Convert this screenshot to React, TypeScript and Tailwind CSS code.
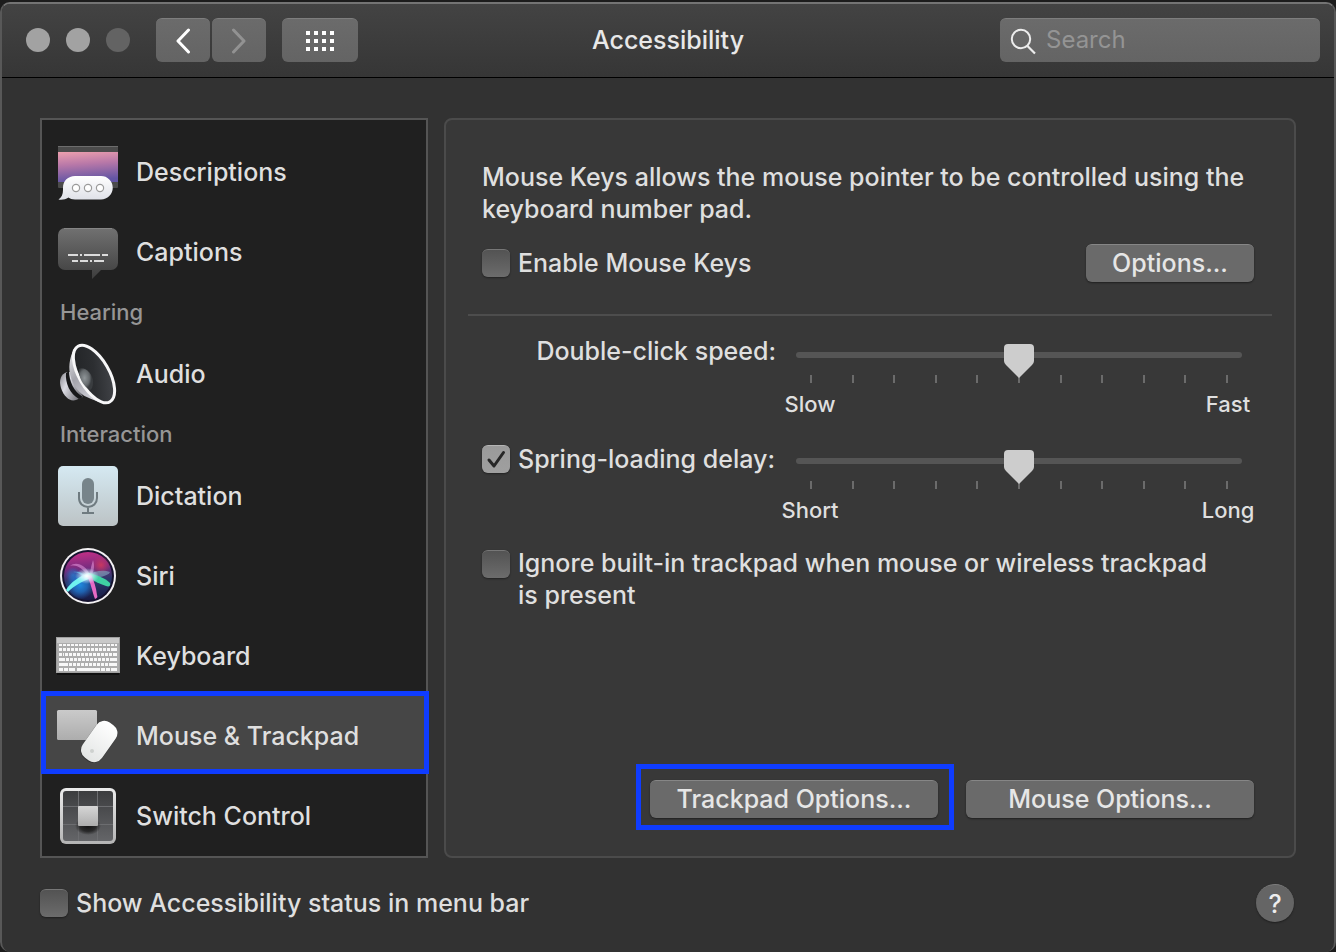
import React, { useState } from 'react';

function DescriptionsIcon() {
  return (
    <svg width="64" height="64" viewBox="0 0 64 64" aria-hidden="true">
      <defs>
        <linearGradient id="desc-sky" x1="0" y1="0" x2="0.15" y2="1">
          <stop offset="0" stopColor="#eda0ae" />
          <stop offset="0.45" stopColor="#b878a8" />
          <stop offset="1" stopColor="#6355a4" />
        </linearGradient>
        <linearGradient id="desc-bubble" x1="0" y1="0" x2="0" y2="1">
          <stop offset="0" stopColor="#ffffff" />
          <stop offset="1" stopColor="#dfe1e8" />
        </linearGradient>
      </defs>
      <rect x="2" y="6" width="60" height="42" rx="1" fill="#4b4b4b" />
      <rect x="2" y="6" width="60" height="1" fill="#6d6d6d" />
      <rect x="2" y="12" width="60" height="30" fill="url(#desc-sky)" />
      <path d="M19 36h26a11.500 11.500 0 0 1 0 23.500H19c-3 0-5-.8-6.500-2C9.500 59.500 6 60 2.500 59.500 5.500 57.500 7 54.500 7 50v-2.500C7 41 12 36 19 36z" fill="url(#desc-bubble)" />
      <g fill="#fff" stroke="#9b9b9b" strokeWidth="1.200">
        <circle cx="20" cy="48" r="3.600" />
        <circle cx="32" cy="48" r="3.600" />
        <circle cx="44" cy="48" r="3.600" />
      </g>
    </svg>
  );
}

function CaptionsIcon() {
  return (
    <svg width="64" height="64" viewBox="0 0 64 64" aria-hidden="true">
      <defs>
        <linearGradient id="cap-bg" x1="0" y1="0" x2="0" y2="1">
          <stop offset="0" stopColor="#717171" />
          <stop offset="1" stopColor="#3e3e3e" />
        </linearGradient>
      </defs>
      <path d="M9 8h46a7 7 0 0 1 7 7v28a7 7 0 0 1-7 7H45l-9 9v-9H9a7 7 0 0 1-7-7V15a7 7 0 0 1 7-7z" fill="url(#cap-bg)" />
      <path d="M8 8.500h48" stroke="#858585" />
      <path d="M12 35h10M24 35h2M28 35h16M46 35h6M16 41h6M24 41h8M34 41h2M38 41h10" stroke="#dcdcdc" strokeWidth="2" />
    </svg>
  );
}

function AudioIcon() {
  return (
    <svg width="64" height="64" viewBox="0 0 64 64" aria-hidden="true">
      <defs>
        <linearGradient id="aud-body" x1="0" y1="0" x2="0.7" y2="1">
          <stop offset="0" stopColor="#f4f4f6" />
          <stop offset="0.45" stopColor="#a3a3ab" />
          <stop offset="1" stopColor="#dcdce4" />
        </linearGradient>
        <linearGradient id="aud-base" x1="0" y1="0" x2="1" y2="0.6">
          <stop offset="0" stopColor="#85858c" />
          <stop offset="0.4" stopColor="#dcdce4" />
          <stop offset="1" stopColor="#77777e" />
        </linearGradient>
        <linearGradient id="aud-cone" x1="0" y1="0" x2="1" y2="1">
          <stop offset="0" stopColor="#1f2123" />
          <stop offset="0.5" stopColor="#2c2e31" />
          <stop offset="1" stopColor="#4a4c51" />
        </linearGradient>
        <radialGradient id="aud-cap" cx="0.4" cy="0.45">
          <stop offset="0" stopColor="#8f9598" />
          <stop offset="0.7" stopColor="#656a6d" />
          <stop offset="1" stopColor="#3a3d40" />
        </radialGradient>
      </defs>
      <path d="M11 30C5 32 2.500 38 5 46c3 9 9 14 15 12l7-3-13-25z" fill="url(#aud-base)" />
      <path d="M13 29c0 10 5 21 14 26l-4 2C14 52 9 41 10 31z" fill="#17181a" />
      <path d="M22 3C16 7 12.500 19 13.500 29c1.500 11 7 20 15 25 8 4 17 7 25 8z" fill="url(#aud-body)" />
      <ellipse cx="38" cy="32" rx="15" ry="32" transform="rotate(-30 38 32)" fill="url(#aud-cone)" stroke="#f7f7f8" strokeWidth="3" />
      <path d="M23 27c5-3 14 4 14 13 0 4-1 7-3 8-7-4-12-13-11-21z" fill="url(#aud-cap)" />
    </svg>
  );
}

function DictationIcon() {
  return (
    <svg width="64" height="64" viewBox="0 0 64 64" aria-hidden="true">
      <defs>
        <linearGradient id="dict-bg" x1="0" y1="0" x2="0" y2="1">
          <stop offset="0" stopColor="#d5e9f2" />
          <stop offset="1" stopColor="#bcc3c5" />
        </linearGradient>
      </defs>
      <rect x="2" y="2" width="60" height="60" rx="5" fill="url(#dict-bg)" />
      <rect x="26" y="14" width="12" height="26" rx="6" fill="#77848a" />
      <path d="M23 28v6c0 5.500 4 9 9 9s9-3.500 9-9v-6M32 43v6M26 49h12" fill="none" stroke="#6f7b80" strokeWidth="2" />
    </svg>
  );
}

function SiriIcon() {
  return (
    <svg width="64" height="64" viewBox="0 0 64 64" aria-hidden="true">
      <defs>
        <linearGradient id="siri-bg" x1="0.4" y1="0" x2="0.5" y2="1">
          <stop offset="0" stopColor="#c02f86" />
          <stop offset="0.32" stopColor="#7a2c80" />
          <stop offset="0.6" stopColor="#2b3a6c" />
          <stop offset="1" stopColor="#171a44" />
        </linearGradient>
        <radialGradient id="siri-blue">
          <stop offset="0" stopColor="#1f8be0" />
          <stop offset="0.5" stopColor="#1f7bd6" stopOpacity="0.7" />
          <stop offset="1" stopColor="#1f6bd0" stopOpacity="0" />
        </radialGradient>
        <radialGradient id="siri-red">
          <stop offset="0" stopColor="#c8385f" />
          <stop offset="1" stopColor="#c03068" stopOpacity="0" />
        </radialGradient>
        <radialGradient id="siri-glow">
          <stop offset="0" stopColor="#ffffff" />
          <stop offset="0.35" stopColor="#e6f8ff" stopOpacity="0.85" />
          <stop offset="1" stopColor="#bfe6ff" stopOpacity="0" />
        </radialGradient>
      </defs>
      <circle cx="32" cy="32" r="28" fill="#f4f2f4" />
      <circle cx="32" cy="32" r="26" fill="#15122f" />
      <circle cx="32" cy="32" r="24" fill="url(#siri-bg)" />
      <circle cx="24" cy="41" r="14.500" fill="url(#siri-blue)" />
      <circle cx="17" cy="31" r="8" fill="url(#siri-blue)" opacity="0.6" />
      <circle cx="45" cy="21" r="10" fill="url(#siri-red)" />
      <path d="M32 32C27 25 21 20 14 22c6-5 16-1 20 9 0-6 2-11 3-15 2 6 1 13-3 17z" fill="#e79be0" opacity="0.55" />
      <path d="M32 31c8-5 16-5 22-3-2 4-10 6-20 5z" fill="#7fa5bd" opacity="0.65" />
      <path d="M34 29C24 31 14 39 10 46l2 2c6-6 13-10 23-14z" fill="#6ff3f0" />
      <path d="M33 29c8 2 16 5 21 10 1 3-1 4-4 3-6-2-13-5-18-9z" fill="#3fd0a2" />
      <path d="M31 32c4 7 5 15 8 23 2-1 3-2 2-4-1-8-3-14-6-20z" fill="#e56ac5" />
      <path d="M29 32c-2-4-8-5-12-4 5 0 9 3 11 7z" fill="#55b8e8" opacity="0.7" />
      <ellipse cx="31" cy="32" rx="12" ry="8" fill="url(#siri-glow)" />
    </svg>
  );
}

function KeyboardIcon() {
  return (
    <svg width="64" height="64" viewBox="0 0 64 64" aria-hidden="true">
      <rect x="1" y="47" width="62" height="4" fill="#111" />
      <rect x="0" y="13" width="64" height="36" fill="#a0a0a0" />
      <rect x="1" y="14" width="62" height="5" fill="#c9c9c9" />
      <rect x="1" y="19" width="62" height="29" fill="#adadad" />
      <g stroke="#f8f8f8" strokeWidth="3">
        <path d="M3 21h58" strokeWidth="2" strokeDasharray="3 1" />
        <path d="M3 25.500h54" strokeDasharray="3 1" />
        <path d="M55 25.500h6" />
        <path d="M3 30.500h5M9 30.500h48" strokeDasharray="3 1" />
        <path d="M57 30.500h4" />
        <path d="M3 35.500h6M54 35.500h7" />
        <path d="M10 35.500h43" strokeDasharray="3 1" />
        <path d="M3 40.500h9M53 40.500h8" />
        <path d="M13 40.500h39" strokeDasharray="3 1" />
        <path d="M3 45.500h4M8 45.500h4M13 45.500h6M21 45.500h23M45 45.500h4M50 45.500h4M55 45.500h6" />
      </g>
    </svg>
  );
}

function MouseTrackpadIcon() {
  return (
    <svg width="64" height="64" viewBox="0 0 64 64" aria-hidden="true">
      <defs>
        <linearGradient id="pad-bg" x1="0" y1="0" x2="0" y2="1">
          <stop offset="0" stopColor="#cacaca" />
          <stop offset="1" stopColor="#adadad" />
        </linearGradient>
        <linearGradient id="mouse-bg" x1="0" y1="0" x2="0" y2="1">
          <stop offset="0" stopColor="#ffffff" />
          <stop offset="1" stopColor="#e4e6e5" />
        </linearGradient>
      </defs>
      <rect x="1" y="6" width="40" height="30" rx="1.500" fill="url(#pad-bg)" />
      <rect x="31" y="16" width="24" height="44" rx="10" transform="rotate(35 43 38)" fill="#222" opacity="0.5" />
      <rect x="31.500" y="16" width="23.500" height="43" rx="9.500" transform="rotate(35 43.250 37.500)" fill="url(#mouse-bg)" />
      <circle cx="36" cy="47" r="2" fill="#ced1cf" />
    </svg>
  );
}

function SwitchControlIcon() {
  return (
    <svg width="64" height="64" viewBox="0 0 64 64" aria-hidden="true">
      <defs>
        <linearGradient id="sw-frame" x1="0" y1="0" x2="0" y2="1">
          <stop offset="0" stopColor="#ececec" />
          <stop offset="1" stopColor="#b4b4b4" />
        </linearGradient>
        <linearGradient id="sw-bg" x1="0" y1="0" x2="0" y2="1">
          <stop offset="0" stopColor="#3c3d3f" />
          <stop offset="1" stopColor="#646568" />
        </linearGradient>
        <linearGradient id="sw-key" x1="0" y1="0" x2="0" y2="1">
          <stop offset="0" stopColor="#d6d6d6" />
          <stop offset="1" stopColor="#adadad" />
        </linearGradient>
        <radialGradient id="sw-shadow">
          <stop offset="0" stopColor="#141414" />
          <stop offset="0.6" stopColor="#1c1c1c" stopOpacity="0.8" />
          <stop offset="1" stopColor="#1c1c1c" stopOpacity="0" />
        </radialGradient>
      </defs>
      <rect x="4" y="4" width="56" height="56" rx="6" fill="url(#sw-frame)" />
      <rect x="7" y="7" width="50" height="50" rx="3" fill="url(#sw-bg)" />
      <path d="M22.500 7v50M41.500 7v50M7 22.500h50M7 40.500h50" stroke="#6c6d70" />
      <ellipse cx="32" cy="42" rx="13" ry="9" fill="url(#sw-shadow)" />
      <rect x="22" y="22" width="20" height="20" rx="1" fill="url(#sw-key)" />
    </svg>
  );
}

const groups = [
  {
    title: '',
    items: [
      { name: 'Descriptions', icon: <DescriptionsIcon /> },
      { name: 'Captions', icon: <CaptionsIcon /> },
    ],
  },
  {
    title: 'Hearing',
    items: [{ name: 'Audio', icon: <AudioIcon /> }],
  },
  {
    title: 'Interaction',
    items: [
      { name: 'Dictation', icon: <DictationIcon /> },
      { name: 'Siri', icon: <SiriIcon /> },
      { name: 'Keyboard', icon: <KeyboardIcon /> },
      { name: 'Mouse & Trackpad', icon: <MouseTrackpadIcon /> },
      { name: 'Switch Control', icon: <SwitchControlIcon /> },
    ],
  },
];

function Checkbox({ id, checked, onChange }: { id: string; checked: boolean; onChange: (value: boolean) => void }) {
  return (
    <span className="relative block size-7 shrink-0">
      <input
        id={id}
        type="checkbox"
        checked={checked}
        onChange={e => onChange(e.target.checked)}
        className="block size-7 appearance-none rounded-md border-t border-[#777] bg-linear-to-b from-[#535353] to-[#6c6c6c] shadow-[0_1px_2px_rgba(0,0,0,0.4)] checked:border-[#b5b5b5] checked:from-[#9a9a9a] checked:to-[#9f9f9f]"
      />
      {checked && (
        <svg className="pointer-events-none absolute inset-0" width="28" height="28" viewBox="0 0 28 28" aria-hidden="true">
          <path d="M7 15l5 6L21.500 7.500" fill="none" stroke="#262626" strokeWidth="3" strokeLinecap="round" strokeLinejoin="round" />
        </svg>
      )}
    </span>
  );
}

function TickSlider({ label, low, high }: { label: string; low: string; high: string }) {
  const [value, setValue] = useState(5);

  return (
    <div className="pt-[17px]">
      <input
        type="range"
        min={0}
        max={10}
        value={value}
        aria-label={label}
        onChange={e => setValue(Number(e.target.value))}
        className="relative z-10 block h-1.5 w-full appearance-none rounded-full bg-[#555] [&::-webkit-slider-runnable-track]:h-1.5 [&::-webkit-slider-thumb]:-mt-2 [&::-webkit-slider-thumb]:h-[34px] [&::-webkit-slider-thumb]:w-[30px] [&::-webkit-slider-thumb]:appearance-none [&::-webkit-slider-thumb]:bg-[#cdcdcd] [&::-webkit-slider-thumb]:[clip-path:path('M4_0H26Q30_0_30_4V17Q30_19_28_21L15_34L2_21Q0_19_0_17V4Q0_0_4_0Z')]"
      />
      <div className="mt-[17px] flex justify-between px-3.5">
        {Array.from({ length: 11 }, (_, i) => (
          <span key={i} className="h-2 w-0.5 bg-[#6b6b6b]" />
        ))}
      </div>
      <div className="-mx-[18px] mt-[9px] flex justify-between text-[22px] leading-6">
        <span className="w-16 text-center">{low}</span>
        <span className="w-16 text-center">{high}</span>
      </div>
    </div>
  );
}

const pushButton = 'h-[38px] rounded-md border-t border-[#868686] bg-[#6a6a6a] pb-0.5 text-center leading-9 text-[#e6e6e6] shadow-[0_1px_2px_rgba(0,0,0,0.45)]';
const toolButton = 'flex h-11 items-center justify-center rounded-md border-t border-[#7e7e7e] bg-linear-to-b from-[#6b6b6b] to-[#646464]';

export default function App() {
  const [selected, setSelected] = useState('Mouse & Trackpad');
  const [mouseKeys, setMouseKeys] = useState(false);
  const [springLoading, setSpringLoading] = useState(true);
  const [ignoreTrackpad, setIgnoreTrackpad] = useState(false);
  const [showStatus, setShowStatus] = useState(false);

  return (
    <div className="flex min-h-screen flex-col bg-[#1c1c1c] pt-0.5 font-['Inter','Liberation_Sans',sans-serif] text-[25px] leading-8 font-medium text-[#dfdfdf]">
      <div className="flex flex-1 flex-col overflow-hidden rounded-[10px] border-x-2 border-t-2 border-x-[#585858] border-t-[#747474] bg-[#323232]">
        <header className="grid grid-cols-[1fr_auto_1fr] items-center border-b border-black bg-linear-to-b from-[#434343] to-[#363636] px-3.5 pt-3.5 pb-[15px]">
          <div className="flex items-center pl-2.5">
            <div className="flex gap-4">
              <button aria-label="Close" className="size-6 rounded-full bg-[#a2a2a2]" />
              <button aria-label="Minimize" className="size-6 rounded-full bg-[#a2a2a2]" />
              <button aria-label="Zoom" disabled className="size-6 rounded-full bg-[#636363]" />
            </div>
            <div className="ml-[26px] flex gap-0.5">
              <button aria-label="Back" className={`${toolButton} w-[54px]`}>
                <svg width="16" height="26" viewBox="0 0 16 26" aria-hidden="true">
                  <path d="M13.500 2L3 13l10.500 11" fill="none" stroke="#fff" strokeWidth="3" strokeLinecap="round" strokeLinejoin="round" />
                </svg>
              </button>
              <button aria-label="Forward" disabled className={`${toolButton} w-[54px]`}>
                <svg width="16" height="26" viewBox="0 0 16 26" aria-hidden="true">
                  <path d="M2.500 2L13 13 2.500 24" fill="none" stroke="#929292" strokeWidth="3" strokeLinecap="round" strokeLinejoin="round" />
                </svg>
              </button>
            </div>
            <button aria-label="Show All" className={`${toolButton} ml-4 w-[76px]`}>
              <svg width="28" height="20" viewBox="0 0 28 20" aria-hidden="true">
                <path d="M0 2h28M0 10h28M0 18h28" stroke="#fff" strokeWidth="4" strokeDasharray="4 4" />
              </svg>
            </button>
          </div>
          <h1 className="px-4 text-[#e8e8e8]">Accessibility</h1>
          <label className="flex h-11 w-80 items-center gap-2 justify-self-end rounded-md border-t border-[#7e7e7e] bg-linear-to-b from-[#6b6b6b] to-[#646464] px-2.5">
            <svg className="shrink-0" width="28" height="28" viewBox="0 0 28 28" aria-hidden="true">
              <circle cx="11" cy="12" r="9.200" fill="none" stroke="#ececec" strokeWidth="2" />
              <path d="M17.500 19l7.500 7.500" stroke="#ececec" strokeWidth="2.200" />
            </svg>
            <input type="search" aria-label="Search" placeholder="Search" className="h-9 w-full min-w-0 bg-transparent pb-0.5 text-[24px] font-normal outline-none placeholder:text-[#949494]" />
          </label>
        </header>

        <main className="flex flex-1 gap-4 px-[38px] pt-10">
          <nav className="w-[388px] shrink-0 border-2 border-[#555] bg-[#202020] pt-3">
            {groups.map(group => (
              <section key={group.title}>
                {group.title && <h2 className="h-[42px] pl-[18px] text-[22px] leading-10 text-[#969696]">{group.title}</h2>}
                {group.items.map(item => (
                  <button key={item.name} onClick={() => setSelected(item.name)} className="relative block h-20 w-full text-left">
                    {selected === item.name && (
                      <span className="absolute -top-[5px] -right-[3px] bottom-0.5 -left-px border-[5px] border-[#0f3cff] bg-[#464646]" />
                    )}
                    <span className="relative flex items-center gap-4 pl-3.5">
                      {item.icon}
                      {item.name}
                    </span>
                  </button>
                ))}
              </section>
            ))}
          </nav>

          <section className="flex min-w-0 flex-1 flex-col rounded-lg border-2 border-[#4b4b4b] bg-[#383838] pt-[41px] pr-10 pb-[38px] pl-9">
            <p>Mouse Keys allows the mouse pointer to be controlled using the keyboard number pad.</p>
            <div className="mt-[19px] flex items-center justify-between">
              <div className="flex items-center gap-2">
                <Checkbox id="mouse-keys" checked={mouseKeys} onChange={setMouseKeys} />
                <label htmlFor="mouse-keys">Enable Mouse Keys</label>
              </div>
              <button className={`${pushButton} w-[168px]`}>Options...</button>
            </div>
            <hr className="-mr-[18px] -ml-3.5 mt-8 border-t-2 border-[#4d4d4d]" />

            <div className="mt-[19px] grid grid-cols-[294px_1fr] gap-x-5 gap-y-[25px] pr-3">
              <div className="text-right whitespace-nowrap">Double-click speed:</div>
              <TickSlider label="Double-click speed" low="Slow" high="Fast" />
              <div className="flex h-9 items-center gap-2">
                <Checkbox id="spring-loading" checked={springLoading} onChange={setSpringLoading} />
                <label htmlFor="spring-loading" className="whitespace-nowrap">Spring-loading delay:</label>
              </div>
              <TickSlider label="Spring-loading delay" low="Short" high="Long" />
            </div>

            <div className="mt-[25px] flex items-start gap-2 pr-6">
              <div className="pt-[3px]">
                <Checkbox id="ignore-trackpad" checked={ignoreTrackpad} onChange={setIgnoreTrackpad} />
              </div>
              <label htmlFor="ignore-trackpad">Ignore built-in trackpad when mouse or wireless trackpad is present</label>
            </div>

            <div className="mt-auto flex justify-end gap-7 pt-10">
              <div className="relative">
                <span className="pointer-events-none absolute -top-4 -right-4 -bottom-3 -left-3.5 border-[5px] border-[#0f3cff]" />
                <button className={`${pushButton} w-72`}>Trackpad Options...</button>
              </div>
              <button className={`${pushButton} w-72`}>Mouse Options...</button>
            </div>
          </section>
        </main>

        <footer className="flex items-center justify-between pt-[26px] pr-10 pb-[30px] pl-[38px]">
          <div className="flex items-center gap-2">
            <Checkbox id="show-status" checked={showStatus} onChange={setShowStatus} />
            <label htmlFor="show-status">Show Accessibility status in menu bar</label>
          </div>
          <button aria-label="Help" className="size-[38px] rounded-full border-t border-[#7d7d7d] bg-[#656565] text-center leading-9 text-[#ededed] shadow-[0_1px_2px_rgba(0,0,0,0.4)]">
            ?
          </button>
        </footer>
      </div>
    </div>
  );
}
